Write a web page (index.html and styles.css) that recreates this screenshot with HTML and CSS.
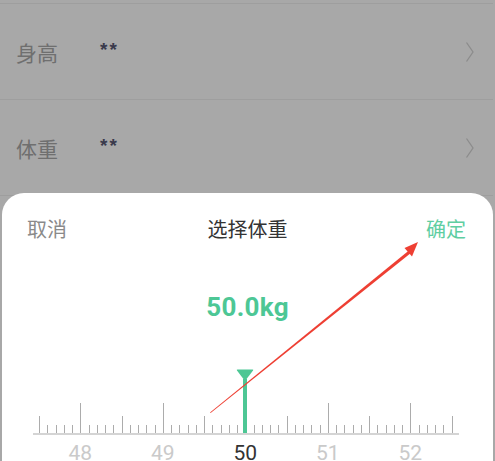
FILE: index.html
```html
<!DOCTYPE html>
<html>
<head>
  <meta charset="utf-8">
  <title>选择体重</title>
  <link rel="stylesheet" href="styles.css">
</head>
<body>
  <div class="screen">
    <!-- 资料列表（被弹窗遮罩压暗） -->
    <ul class="info-list">
      <li class="info-row">
        <span class="info-label">身高</span>
        <span class="info-value">**</span>
        <svg class="chevron" width="10" height="22" viewBox="0 0 10 22"><path d="M1.5 1.5 L8 11 L1.5 20.5" fill="none" stroke="#8c8c8c" stroke-width="1.3"/></svg>
      </li>
      <li class="info-row">
        <span class="info-label">体重</span>
        <span class="info-value">**</span>
        <svg class="chevron" width="10" height="22" viewBox="0 0 10 22"><path d="M1.5 1.5 L8 11 L1.5 20.5" fill="none" stroke="#8c8c8c" stroke-width="1.3"/></svg>
      </li>
    </ul>

    <!-- 底部弹窗 -->
    <div class="sheet">
      <div class="sheet-head">
        <span class="btn-cancel">取消</span>
        <span class="sheet-title">选择体重</span>
        <span class="btn-ok">确定</span>
      </div>

      <div class="weight-value">50.0kg</div>

      <div class="ruler">
        <div class="scale" id="scale">
          <div class="pointer">
            <svg class="pointer-head" width="18" height="12" viewBox="0 0 18 12"><path d="M1.5 0.5 H16.5 Q17.8 0.5 17 1.6 L10.2 10.6 Q9 12 7.8 10.6 L1 1.6 Q0.2 0.5 1.5 0.5 Z" fill="#4dc795"/></svg>
            <div class="pointer-stem"></div>
          </div>
        </div>
        <div class="scale-labels">
          <span>48</span>
          <span>49</span>
          <span class="active">50</span>
          <span>51</span>
          <span>52</span>
        </div>
      </div>
    </div>

    <!-- 标注箭头 -->
    <svg class="mark-arrow" width="495" height="461" viewBox="0 0 495 461">
      <polygon points="210,412.5 409.5,250 411.5,252.5 210.6,413" fill="#ee3f33"/>
      <polygon points="418,242 404.5,248 412,256.5" fill="#ee3f33"/>
    </svg>
  </div>

  <script>
    // 刻度：47.5 ~ 52.5，每 0.1 一格
    const scale = document.getElementById('scale');
    for (let i = 0; i <= 50; i++) {
      const tick = document.createElement('div');
      tick.classList.add('tick');
      if (i % 10 === 5) {
        tick.classList.add('tick-major');
      } else if (i % 5 === 0) {
        tick.classList.add('tick-half');
      }
      scale.appendChild(tick);
    }
  </script>
</body>
</html>
```

FILE: styles.css
```css
body {
  margin: 0;
  font-family: "Noto Sans CJK SC", "Noto Sans", sans-serif;
}
.screen {
  position: relative;
  width: 495px;
  height: 461px;
  overflow: hidden;
  background: #a8a8a8;
}
.info-list {
  list-style: none;
  margin: 0;
  padding: 0;
  border-top: 1px solid #9e9e9e;
  margin-top: 3px;
  margin-right: 2px;
}
.info-row {
  display: flex;
  align-items: center;
  height: 95px;
  padding: 0 18px 0 16px;
  border-bottom: 1px solid #9e9e9e;
}
.info-label {
  width: 84px;
  font-size: 21px;
  color: #6f6f6f;
}
.info-value {
  flex: 1;
  font-family: "Liberation Sans", sans-serif;
  font-size: 19px;
  font-weight: bold;
  letter-spacing: 2px;
  color: #3a3a4c;
  padding-bottom: 4px;
}
.chevron {
  display: block;
}

/* 弹窗 */
.sheet {
  position: absolute;
  left: 2px;
  right: 2px;
  top: 193px;
  bottom: -40px;
  background: #fff;
  border-radius: 22px 22px 0 0;
}
.sheet-head {
  display: flex;
  justify-content: space-between;
  align-items: center;
  height: 70px;
  padding: 0 27px 0 25px;
  font-size: 20px;
}
.btn-cancel {
  color: #8a8a8a;
}
.sheet-title {
  color: #333;
  margin-left: 2px;
}
.btn-ok {
  color: #5fcea2;
}
.weight-value {
  margin-top: 27px;
  height: 34px;
  line-height: 34px;
  text-align: center;
  font-family: Roboto, sans-serif;
  font-size: 26px;
  font-weight: bold;
  color: #4dc795;
  letter-spacing: 0.3px;
}

/* 刻度尺 */
.ruler {
  margin-top: 45px;
}
.scale {
  position: relative;
  display: flex;
  justify-content: space-between;
  align-items: flex-end;
  height: 64px;
  margin: 0 34px 0 31px;
  padding: 0 6px 0 6px;
  border-bottom: 2px solid #d4d4d4;
}
.tick {
  width: 1px;
  height: 8px;
  background: #acacac;
}
.tick-half {
  height: 17px;
}
.tick-major {
  height: 30px;
}
.pointer {
  position: absolute;
  left: 203px;
  top: 0;
  bottom: 0;
  width: 18px;
  display: flex;
  flex-direction: column;
  align-items: center;
}
.pointer-head {
  display: block;
}
.pointer-stem {
  flex: 1;
  width: 4px;
  margin-top: -2px;
  background: #4dc795;
}
.scale-labels {
  display: flex;
  padding-left: 37px;
  margin-top: 4px;
}
.scale-labels span {
  width: 82.5px;
  text-align: center;
  font-family: Roboto, sans-serif;
  font-size: 21px;
  line-height: 28px;
  color: #cacaca;
}
.scale-labels .active {
  color: #333;
}

.mark-arrow {
  position: absolute;
  left: 0;
  top: 0;
  pointer-events: none;
}
```
